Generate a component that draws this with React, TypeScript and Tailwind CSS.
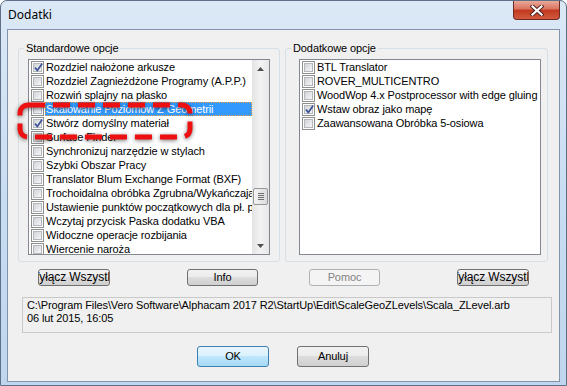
import React from "react";

const leftItems: { label: string; checked?: boolean; selected?: boolean }[] = [
  { label: "Rozdziel nałożone arkusze", checked: true },
  { label: "Rozdziel Zagnieżdżone Programy (A.P.P.)" },
  { label: "Rozwiń splajny na płasko" },
  { label: "Skalowanie Poziomów Z Geometrii", selected: true },
  { label: "Stwórz domyślny materiał", checked: true },
  { label: "Surface Finder" },
  { label: "Synchronizuj narzędzie w stylach" },
  { label: "Szybki Obszar Pracy" },
  { label: "Translator Blum Exchange Format (BXF)" },
  { label: "Trochoidalna obróbka Zgrubna/Wykańczająca" },
  { label: "Ustawienie punktów początkowych dla pł. prostych" },
  { label: "Wczytaj przycisk Paska dodatku VBA" },
  { label: "Widoczne operacje rozbijania" },
  { label: "Wiercenie naroża" },
];

const rightItems: { label: string; checked?: boolean }[] = [
  { label: "BTL Translator" },
  { label: "ROVER_MULTICENTRO" },
  { label: "WoodWop 4.x Postprocessor with edge gluing" },
  { label: "Wstaw obraz jako mapę", checked: true },
  { label: "Zaawansowana Obróbka 5-osiowa" },
];

function CheckBox({ checked }: { checked?: boolean }) {
  return (
    <span className="relative w-[13px] h-[13px] shrink-0 border border-[#8e8f8f] bg-white p-[1px] flex">
      <span className="flex-1 border border-[#b4b8bd] bg-gradient-to-br from-[#d0d4d9] to-[#f6f6f6]" />
      {checked && (
        <svg className="absolute left-[1px] top-[0px]" width="11" height="11" viewBox="0 0 11 11">
          <path d="M2 5.5 L4.3 8.6 L9.2 1.6" fill="none" stroke="#3d5296" strokeWidth="1.7" strokeLinejoin="round" />
        </svg>
      )}
    </span>
  );
}

function Row({ label, checked, selected }: { label: string; checked?: boolean; selected?: boolean }) {
  return (
    <div className="h-[14px] flex items-center pl-[2px] shrink-0">
      <CheckBox checked={checked} />
      <span
        className={
          selected
            ? "ml-[1px] flex-1 h-[14px] flex items-center pl-[1px] whitespace-nowrap overflow-hidden bg-[#3399ff] text-white outline outline-1 outline-dotted outline-[#f0a040] -outline-offset-1"
            : "ml-[1px] flex-1 h-[14px] flex items-center pl-[1px] whitespace-nowrap overflow-hidden text-black"
        }
      >
        {label}
      </span>
    </div>
  );
}

function ScrollBar() {
  return (
    <div className="w-[17px] shrink-0 flex flex-col bg-gradient-to-r from-[#e3e3e3] via-[#f3f3f3] to-[#e6e6e6]">
      <div className="h-[17px] flex items-center justify-center">
        <svg width="7" height="4" viewBox="0 0 7 4">
          <path d="M0 4 L3.5 0 L7 4 Z" fill="#505050" />
        </svg>
      </div>
      <div className="h-[111px]" />
      <div className="h-[17px] mx-[1px] rounded-[2px] border border-[#979797] bg-gradient-to-r from-[#f4f4f4] to-[#dcdcdc] flex flex-col items-center justify-center gap-[1px]">
        <span className="w-[6px] h-[1px] bg-[#6e6e6e]" />
        <span className="w-[6px] h-[1px] bg-[#6e6e6e]" />
        <span className="w-[6px] h-[1px] bg-[#6e6e6e]" />
        <span className="w-[6px] h-[1px] bg-[#6e6e6e]" />
      </div>
      <div className="flex-1" />
      <div className="h-[17px] flex items-center justify-center">
        <svg width="7" height="4" viewBox="0 0 7 4">
          <path d="M0 0 L3.5 4 L7 0 Z" fill="#505050" />
        </svg>
      </div>
    </div>
  );
}

function WinButton({
  children,
  className,
  kind = "normal",
}: {
  children: React.ReactNode;
  className: string;
  kind?: "normal" | "default" | "disabled";
}) {
  const look =
    kind === "default"
      ? "border-[#3c7fb1] bg-[linear-gradient(#eaf6fd,#d9f0fc_50%,#bee6fd_50%,#a7d9f5)] text-black"
      : kind === "disabled"
      ? "border-[#adb2b5] bg-[#f4f4f4] text-[#838383]"
      : "border-[#707070] bg-[linear-gradient(#f2f2f2,#ebebeb_50%,#dddddd_50%,#cfcfcf)] text-black";
  return (
    <div
      className={`shrink-0 rounded-[3px] border flex items-center justify-center whitespace-nowrap overflow-hidden ${look} ${className}`}
    >
      {children}
    </div>
  );
}

export default function App() {
  return (
    <div className="relative w-[567px] h-[386px] bg-white overflow-hidden font-['Liberation_Sans',Arial,sans-serif] text-[11px] leading-[13px] tracking-[-0.1px]">
      <div className="h-full flex flex-col rounded-t-[7px] border border-[#5e7085] bg-gradient-to-b from-[#dbe8f6] via-[#c9ddf2] to-[#bfd6ee] px-[6px] pb-[3px]">
        {/* title bar */}
        <div className="h-[28px] flex items-start shrink-0">
          <span className="mt-[6px] pl-[1px] text-[12px] leading-[16px] tracking-normal text-black font-['Noto_Sans',sans-serif]">
            Dodatki
          </span>
          <div className="ml-auto w-[47px] h-[19px] rounded-b-[4px] border border-[#6b2a22] border-t-0 bg-[linear-gradient(#e9a99b,#d9735e_45%,#c2381f_50%,#d05a3f)] flex items-center justify-center">
            <svg width="14" height="11" viewBox="0 0 14 11">
              <path d="M2.5 1.5 L11.5 9.5 M11.5 1.5 L2.5 9.5" stroke="#4a2020" strokeWidth="4" strokeLinecap="square" />
              <path d="M2.5 1.5 L11.5 9.5 M11.5 1.5 L2.5 9.5" stroke="#ffffff" strokeWidth="2.2" strokeLinecap="square" />
            </svg>
          </div>
        </div>

        {/* client area */}
        <div className="flex-1 flex flex-col border border-[#8194a9] bg-[#f0f0f0]">
          <div className="flex gap-[5px] pl-[10px] pt-[12px]">
            <fieldset className="w-[262px] h-[220px] rounded-[3px] border border-[#d5dfe5] pl-[9px] pt-[4px]">
              <legend className="-ml-[4px] px-[2px] text-black">Standardowe opcje</legend>
              <div className="w-[242px] h-[196px] border border-[#828790] bg-white flex">
                <div className="flex-1 flex flex-col overflow-hidden">
                  {leftItems.map((it) => (
                    <Row key={it.label} {...it} />
                  ))}
                </div>
                <ScrollBar />
              </div>
            </fieldset>
            <fieldset className="w-[263px] h-[220px] rounded-[3px] border border-[#d5dfe5] pl-[13px] pt-[4px]">
              <legend className="-ml-[8px] px-[2px] text-black">Dodatkowe opcje</legend>
              <div className="w-[242px] h-[196px] border border-[#828790] bg-white flex flex-col overflow-hidden">
                {rightItems.map((it) => (
                  <Row key={it.label} {...it} />
                ))}
              </div>
            </fieldset>
          </div>

          <div className="flex mt-[7px]">
            <WinButton className="ml-[30px] w-[72px] h-[17px] text-[12px]">Wyłącz Wszystko</WinButton>
            <WinButton className="ml-[77px] w-[71px] h-[17px]">Info</WinButton>
            <WinButton className="ml-[51px] w-[71px] h-[17px]" kind="disabled">
              Pomoc
            </WinButton>
            <WinButton className="ml-[77px] w-[72px] h-[17px] text-[12px]">Wyłącz Wszystko</WinButton>
          </div>

          <div className="ml-[14px] mt-[11px] w-[530px] h-[36px] border border-[#c9c9c9] bg-[#f0f0f0] pl-[4px] pt-[1px] text-black">
            <div className="whitespace-nowrap">
              C:\Program Files\Vero Software\Alphacam 2017 R2\StartUp\Edit\ScaleGeoZLevels\Scala_ZLevel.arb
            </div>
            <div>06 lut 2015, 16:05</div>
          </div>

          <div className="flex mt-[13px]">
            <WinButton className="ml-[189px] w-[72px] h-[21px]" kind="default">
              OK
            </WinButton>
            <WinButton className="ml-[28px] w-[72px] h-[21px]">Anuluj</WinButton>
          </div>
        </div>
      </div>

      {/* red dashed annotation drawn over the dialog */}
      <svg
        className="absolute left-[15px] top-[100px] drop-shadow-[0_1px_2px_rgba(0,0,0,0.55)]"
        width="180"
        height="42"
        viewBox="0 0 180 42"
      >
        <rect x="5" y="5" width="170" height="32" rx="8" fill="none" stroke="#ee1010" strokeWidth="5" strokeDasharray="17 8" />
      </svg>
    </div>
  );
}
